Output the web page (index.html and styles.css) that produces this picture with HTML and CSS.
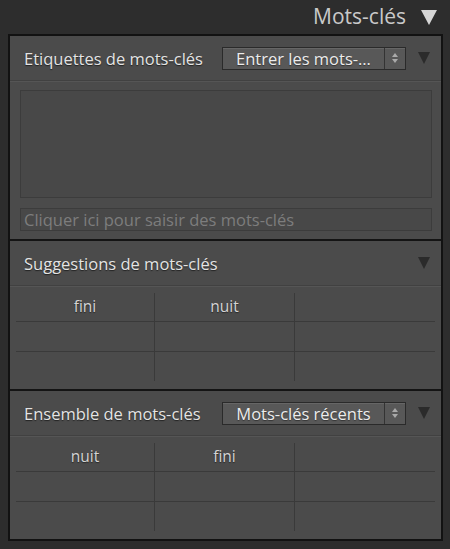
FILE: index.html
```html
<html>
  <head>
    <meta charset="utf-8">
    <link rel="stylesheet" href="styles.css">
  </head>
  <body>
    <div class="panel-title">
      <span>Mots-clés</span>
      <span class="tri tri-light"></span>
    </div>
    <div class="panel">
      <div class="section section-tags">
        <div class="section-head">
          <span class="label">Etiquettes de mots-clés</span>
          <div class="popup">
            <span class="popup-text">Entrer les mots-…</span>
            <span class="popup-arrows"><i class="up"></i><i class="down"></i></span>
          </div>
          <span class="tri"></span>
        </div>
        <div class="tag-area"></div>
        <div class="tag-input">Cliquer ici pour saisir des mots-clés</div>
      </div>

      <div class="section section-grid">
        <div class="section-head">
          <span class="label">Suggestions de mots-clés</span>
          <span class="tri"></span>
        </div>
        <div class="kw-grid">
          <div class="cell">fini</div><div class="cell">nuit</div><div class="cell"></div>
          <div class="cell"></div><div class="cell"></div><div class="cell"></div>
          <div class="cell"></div><div class="cell"></div><div class="cell"></div>
        </div>
      </div>

      <div class="section section-grid last">
        <div class="section-head">
          <span class="label">Ensemble de mots-clés</span>
          <div class="popup">
            <span class="popup-text">Mots-clés récents</span>
            <span class="popup-arrows"><i class="up"></i><i class="down"></i></span>
          </div>
          <span class="tri"></span>
        </div>
        <div class="kw-grid">
          <div class="cell">nuit</div><div class="cell">fini</div><div class="cell"></div>
          <div class="cell"></div><div class="cell"></div><div class="cell"></div>
          <div class="cell"></div><div class="cell"></div><div class="cell"></div>
        </div>
      </div>
    </div>
  </body>
</html>
```

FILE: styles.css
```css
body{
  margin: 0;
  width: 450px;
  height: 549px;
  background: #2d2d2d;
  font-family: "Open Sans", "DejaVu Sans", sans-serif;
  overflow: hidden;
}
.panel-title{
  height: 34px;
  display: flex;
  align-items: center;
  justify-content: flex-end;
  padding-right: 13px;
  color: #c9c9c9;
  font-size: 21px;
}
.panel-title span:first-child{
  margin-right: 15px;
  margin-top: -2px;
}
.tri{
  width: 0;
  height: 0;
  border-left: 6px solid transparent;
  border-right: 6px solid transparent;
  border-top: 12px solid #2b2b2b;
}
.tri-light{
  border-left-width: 8px;
  border-right-width: 8px;
  border-top: 15px solid #d6d6d6;
  margin-top: 1px;
}
.panel{
  margin: 0 7px 0 8px;
  border: 2px solid #121212;
  background: #4b4b4b;
}
.section{
  border-bottom: 2px solid #141414;
}
.section.last{
  border-bottom: none;
}
.section-head{
  height: 44px;
  display: flex;
  align-items: center;
  padding: 0 11px 0 14px;
  border-bottom: 1px solid #414141;
  box-shadow: 0 1px 0 #555;
}
.label{
  flex: 1;
  color: #e4e4e4;
  font-size: 16.5px;
  text-shadow: 0 1px 1px #222;
}
.popup{
  display: flex;
  width: 182px;
  height: 21px;
  border: 1px solid #2a2a2a;
  background: #585858;
  margin-right: 12px;
  box-shadow: inset 0 1px 0 #666;
}
.popup-text{
  flex: 1;
  color: #ececec;
  font-size: 16.5px;
  line-height: 21px;
  text-align: center;
  white-space: nowrap;
  text-shadow: 0 1px 1px #333;
}
.popup-arrows{
  width: 20px;
  border-left: 1px solid #333;
  display: flex;
  flex-direction: column;
  align-items: center;
  justify-content: center;
  gap: 2px;
}
.popup-arrows i{
  width: 0;
  height: 0;
  border-left: 3px solid transparent;
  border-right: 3px solid transparent;
}
.popup-arrows .up{
  border-bottom: 4px solid #aaa;
}
.popup-arrows .down{
  border-top: 4px solid #aaa;
}
.tag-area{
  height: 106px;
  margin: 9px 9px 0 10px;
  border: 1px solid #3c3c3c;
  background: #484848;
}
.tag-input{
  height: 21px;
  margin: 10px 9px 8px 10px;
  border: 1px solid #3c3c3c;
  background: #484848;
  color: #7d7d7d;
  font-size: 16.5px;
  line-height: 21px;
  padding-left: 3px;
  white-space: nowrap;
  overflow: hidden;
}
.kw-grid{
  display: grid;
  grid-template-columns: 139px 140px 140px;
  grid-template-rows: 29px 30px 29px;
  margin: 7px 6px 8px 6px;
}
.cell{
  color: #d4d4d4;
  font-size: 15.5px;
  text-align: center;
  line-height: 26px;
  text-shadow: 0 1px 1px #2a2a2a;
  border-right: 1px solid #3a3a3a;
  border-bottom: 1px solid #3a3a3a;
}
.cell:nth-child(3n){
  border-right: none;
}
.cell:nth-child(n+7){
  border-bottom: none;
}
```
